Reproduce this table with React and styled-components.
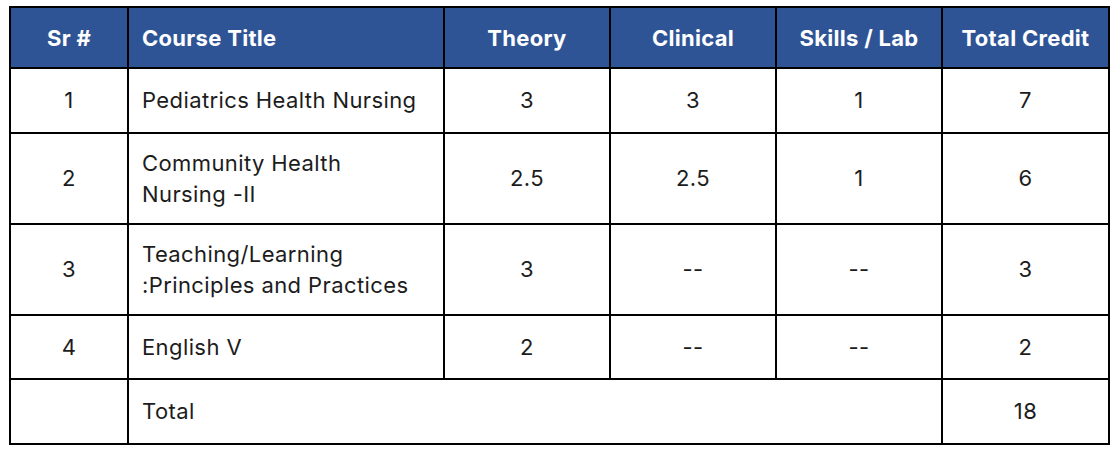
import React from 'react';
import styled, { createGlobalStyle } from 'styled-components';

const GlobalStyle = createGlobalStyle`
  html, body {
    margin: 0;
    padding: 0;
    background: #ffffff;
  }
`;

const Page = styled.div`
  padding: 6px 10px 0 9px;
  font-family: Inter, 'Open Sans', sans-serif;
`;

const Table = styled.table`
  border-collapse: collapse;
  table-layout: fixed;
  width: 1099px;
  border: 2px solid #000;
`;

const Col = styled.col`
  width: ${(p) => p.$w}px;
`;

const HeadRow = styled.tr`
  height: 61px;
  background: #2f5496;
`;

const HeadCell = styled.th`
  border: 2px solid #000;
  color: #ffffff;
  font-weight: 700;
  font-size: 22px;
  letter-spacing: 0.3px;
  text-align: ${(p) => p.$align || 'center'};
  padding: 0 ${(p) => (p.$align === 'left' ? '13px' : '0')};
  white-space: nowrap;
`;

const Row = styled.tr`
  height: ${(p) => p.$h}px;
`;

const Cell = styled.td`
  border: 2px solid #000;
  color: #1c1c1c;
  font-size: 22px;
  letter-spacing: 0.4px;
  line-height: 31px;
  text-align: ${(p) => p.$align || 'center'};
  padding: 0 ${(p) => (p.$align === 'left' ? '13px' : '0')};
  vertical-align: middle;
`;

const courses = [
  { sr: '1', title: ['Pediatrics Health Nursing'], theory: '3', clinical: '3', lab: '1', total: '7', h: 65 },
  { sr: '2', title: ['Community Health', 'Nursing -II'], theory: '2.5', clinical: '2.5', lab: '1', total: '6', h: 91 },
  { sr: '3', title: ['Teaching/Learning', ':Principles and Practices'], theory: '3', clinical: '--', lab: '--', total: '3', h: 91 },
  { sr: '4', title: ['English V'], theory: '2', clinical: '--', lab: '--', total: '2', h: 64 },
];

const App = () => {
  return (
    <Page>
      <GlobalStyle />
      <Table>
        <colgroup>
          <Col $w={118} />
          <Col $w={316} />
          <Col $w={166} />
          <Col $w={166} />
          <Col $w={166} />
          <Col $w={167} />
        </colgroup>
        <thead>
          <HeadRow>
            <HeadCell>Sr #</HeadCell>
            <HeadCell $align="left">Course Title</HeadCell>
            <HeadCell>Theory</HeadCell>
            <HeadCell>Clinical</HeadCell>
            <HeadCell>Skills / Lab</HeadCell>
            <HeadCell>Total Credit</HeadCell>
          </HeadRow>
        </thead>
        <tbody>
          {courses.map((c) => (
            <Row key={c.sr} $h={c.h}>
              <Cell>{c.sr}</Cell>
              <Cell $align="left">
                {c.title.map((line, i) => (
                  <div key={i}>{line}</div>
                ))}
              </Cell>
              <Cell>{c.theory}</Cell>
              <Cell>{c.clinical}</Cell>
              <Cell>{c.lab}</Cell>
              <Cell>{c.total}</Cell>
            </Row>
          ))}
          <Row $h={65}>
            <Cell />
            <Cell $align="left" colSpan={4}>Total</Cell>
            <Cell>18</Cell>
          </Row>
        </tbody>
      </Table>
    </Page>
  );
};

export default App;
